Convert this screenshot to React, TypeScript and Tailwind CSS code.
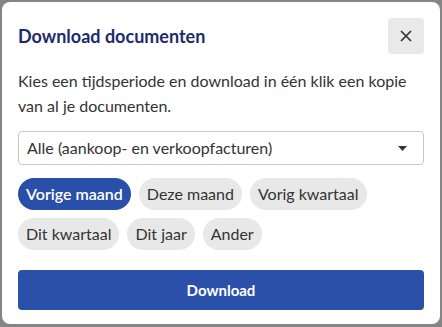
import React, { useState } from 'react';

const periods = [
  ['Vorige maand', 'Deze maand', 'Vorig kwartaal'],
  ['Dit kwartaal', 'Dit jaar', 'Ander'],
];

const App: React.FC = () => {
  const [active, setActive] = useState('Vorige maand');

  return (
    <div className="w-[442px] h-[327px] bg-[#858585] pl-[2px] pt-[2px] font-['Lato',sans-serif]">
      <div className="w-[438px] h-[322px] bg-white rounded-lg px-4 pt-4 flex flex-col">
        <div className="flex items-center justify-between h-9">
          <h2 className="text-[18px] font-bold text-[#1c2b6b]">Download documenten</h2>
          <button className="w-9 h-9 rounded bg-[#e9e9e9] flex items-center justify-center">
            <svg width="12" height="12" viewBox="0 0 12 12">
              <path d="M1 1L11 11M11 1L1 11" stroke="#333" strokeWidth="1.7" />
            </svg>
          </button>
        </div>

        <p className="mt-[14px] text-[16px] leading-[25px] text-[#333]">
          Kies een tijdsperiode en download in één klik een kopie van al je documenten.
        </p>

        <div className="mt-[13px] h-[34px] border border-[#c8c8c8] rounded flex items-center justify-between pl-2 pr-4">
          <span className="text-[16px] text-[#333]">Alle (aankoop- en verkoopfacturen)</span>
          <svg width="9" height="5" viewBox="0 0 9 5">
            <path d="M0 0H9L4.5 5Z" fill="#333" />
          </svg>
        </div>

        <div className="mt-[13px] flex flex-col gap-2">
          {periods.map((row, i) => (
            <div key={i} className="flex gap-2">
              {row.map((p) => (
                <button
                  key={p}
                  onClick={() => setActive(p)}
                  className={`h-8 px-2 rounded-full text-[16px] ${
                    active === p ? 'bg-[#2a4fa8] text-white font-semibold' : 'bg-[#e8e8e8] text-[#333]'
                  }`}
                >
                  {p}
                </button>
              ))}
            </div>
          ))}
        </div>

        <button className="mt-5 h-10 w-full rounded bg-[#2a50a9] text-white text-[15px] font-bold">
          Download
        </button>
      </div>
    </div>
  );
};

export default App;
